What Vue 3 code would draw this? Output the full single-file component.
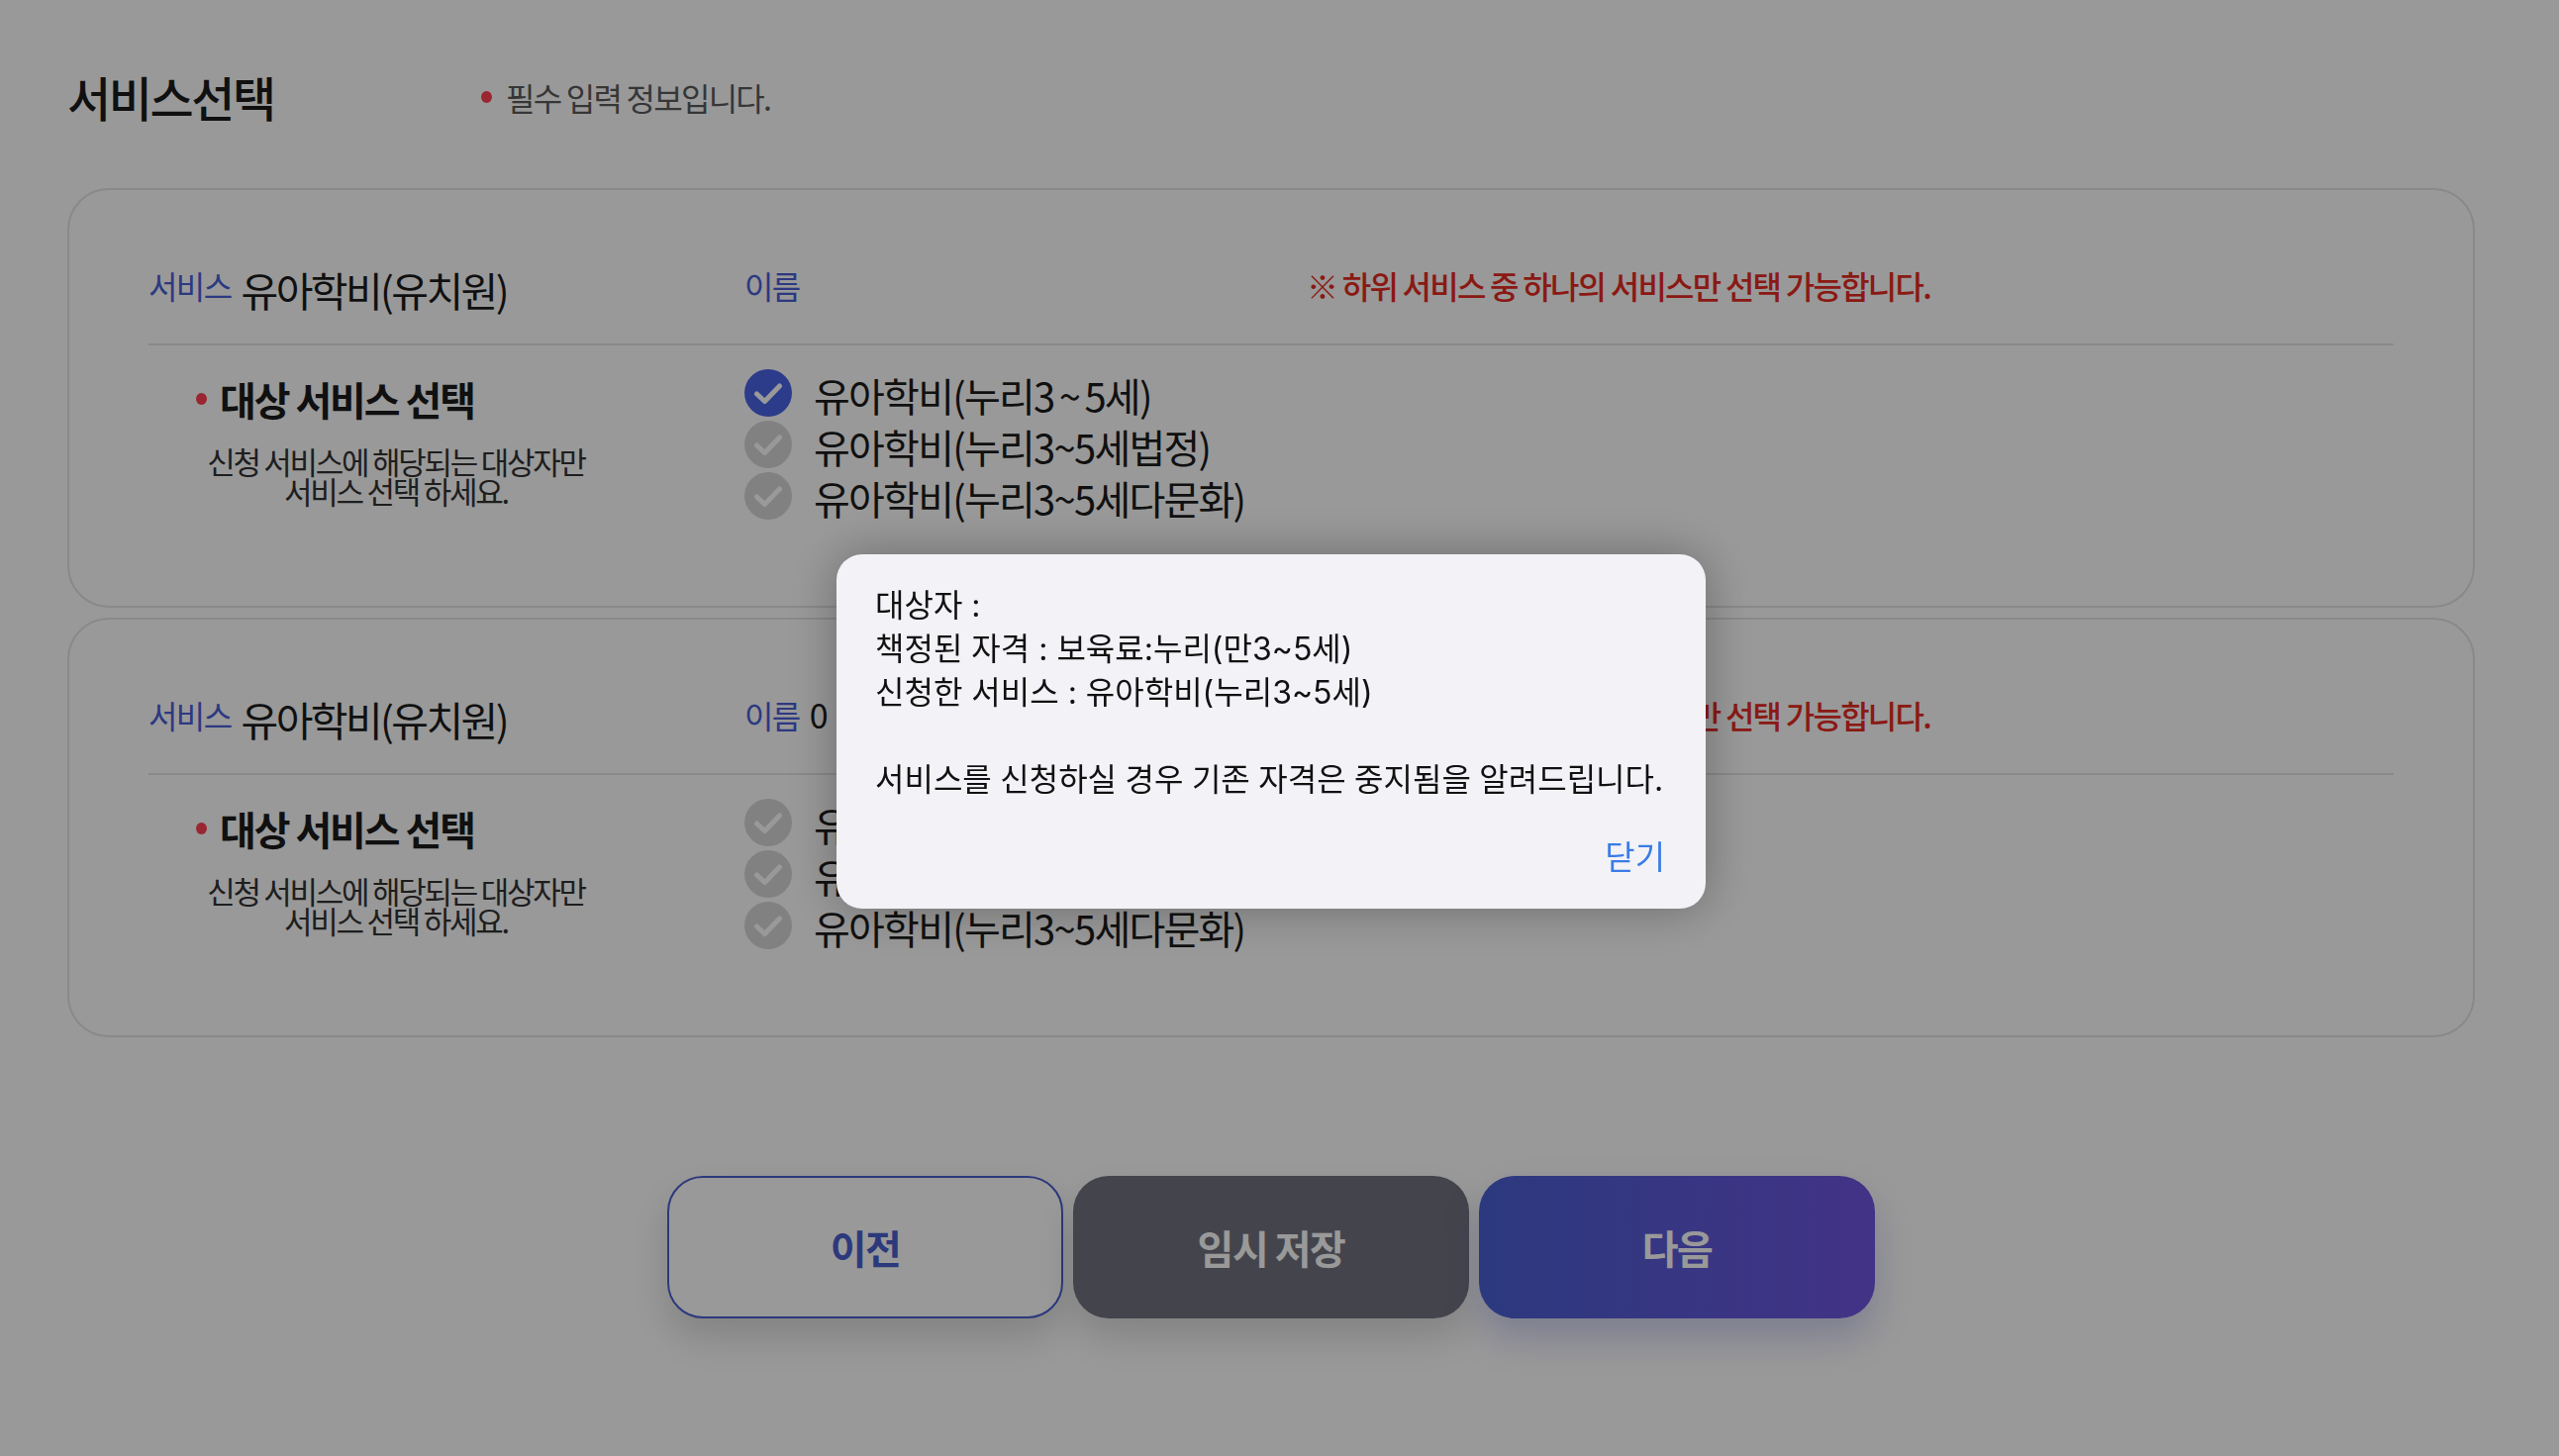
<script setup>
const services = [
  {
    name: '',
    options: [
      { label: '유아학비(누리3 ~ 5세)', checked: true },
      { label: '유아학비(누리3~5세법정)', checked: false },
      { label: '유아학비(누리3~5세다문화)', checked: false }
    ]
  },
  {
    name: '0',
    options: [
      { label: '유아학비(누리3~5세)', checked: false },
      { label: '유아학비(누리3~5세법정)', checked: false },
      { label: '유아학비(누리3~5세다문화)', checked: false }
    ]
  }
]
</script>

<template>
  <div class="page">
    <header class="head">
      <h1 class="page-title">서비스선택</h1>
      <p class="required"><span class="dot"></span>필수 입력 정보입니다.</p>
    </header>

    <section v-for="(svc, i) in services" :key="i" class="card">
      <div class="card-head">
        <div class="col-left">
          <span class="key">서비스</span>
          <span class="val">유아학비(유치원)</span>
        </div>
        <div class="col-name">
          <span class="key">이름</span>
          <span class="val name-val">{{ svc.name }}</span>
        </div>
        <div class="notice">※ 하위 서비스 중 하나의 서비스만 선택 가능합니다.</div>
      </div>
      <div class="card-body">
        <div class="col-left intro">
          <h2 class="target"><span class="dot"></span>대상 서비스 선택</h2>
          <p class="desc">신청 서비스에 해당되는 대상자만<br />서비스 선택 하세요.</p>
        </div>
        <ul class="options">
          <li v-for="opt in svc.options" :key="opt.label" class="option">
            <svg class="check" :class="{ on: opt.checked }" viewBox="0 0 48 48">
              <circle class="disc" cx="24" cy="24" r="24" />
              <path class="tick" d="M12.5 25l8 7.5L35.5 17" />
            </svg>
            <span class="opt-label">{{ opt.label }}</span>
          </li>
        </ul>
      </div>
    </section>

    <div class="actions">
      <button class="btn prev">이전</button>
      <button class="btn save">임시 저장</button>
      <button class="btn next">다음</button>
    </div>

    <div class="overlay">
      <div class="modal">
        <div class="msg">
          <div>대상자 :</div>
          <div>책정된 자격 : 보육료:누리(만3~5세)</div>
          <div>신청한 서비스 : 유아학비(누리3~5세)</div>
          <div class="blank"></div>
          <div class="tight">서비스를 신청하실 경우 기존 자격은 중지됨을 알려드립니다.</div>
        </div>
        <div class="modal-foot"><span class="close">닫기</span></div>
      </div>
    </div>
  </div>
</template>

<style scoped>
.page {
  box-sizing: border-box;
  width: 100%;
  min-height: 100vh;
  padding: 0 85px 0 68px;
  background: #fff;
  color: #1c1c1c;
  font-family: "Noto Sans CJK KR", "Noto Sans", sans-serif;
}
.head {
  box-sizing: border-box;
  height: 190px;
  padding-top: 5px;
  display: flex;
  align-items: center;
}
.page-title {
  margin: 0;
  width: 418px;
  font-size: 48px;
  font-weight: 500;
  letter-spacing: -2.4px;
  line-height: 1.2;
}
.required {
  margin: 0;
  display: flex;
  align-items: center;
  font-size: 32px;
  letter-spacing: -1.75px;
  color: #5a5a5a;
}
.dot {
  width: 11px;
  height: 12px;
  margin-right: 14px;
  border-radius: 50%;
  background: #ff4050;
  flex: none;
}
.card {
  box-sizing: border-box;
  height: 424px;
  margin-bottom: 10px;
  padding: 0 80px;
  border: 2px solid #e4e4e4;
  border-radius: 42px;
}
.card-head {
  box-sizing: border-box;
  height: 157px;
  padding-top: 45px;
  display: flex;
  align-items: center;
  border-bottom: 2px solid #e4e4e4;
}
.col-left {
  width: 602px;
  flex: none;
}
.key {
  font-size: 32px;
  letter-spacing: -1.6px;
  color: #4a60d8;
  position: relative;
  top: -8px;
}
.val {
  margin-left: 10px;
  font-size: 41px;
  letter-spacing: -2.6px;
}
.col-name {
  width: 568px;
  flex: none;
}
.col-name .key {
  top: -4.5px;
}
.name-val {
  position: relative;
  top: -4.5px;
  font-size: 34px;
}
.notice {
  position: relative;
  top: -4.5px;
  font-size: 32px;
  font-weight: 500;
  letter-spacing: -1.75px;
  color: #e62b22;
  white-space: nowrap;
}
.card-body {
  display: flex;
  padding-top: 24px;
}
.intro {
  box-sizing: border-box;
  width: 602px;
}
.target {
  margin: 4px 0 0 48px;
  display: flex;
  align-items: center;
  font-size: 40px;
  font-weight: 700;
  letter-spacing: -2.1px;
  line-height: 1.3;
}
.target .dot {
  margin-right: 13px;
}
.desc {
  margin: 22px 0 0;
  width: 500px;
  text-align: center;
  font-size: 31px;
  line-height: 30px;
  letter-spacing: -2.26px;
  color: #333;
}
.options {
  margin: 0;
  padding: 0;
  list-style: none;
  display: flex;
  flex-direction: column;
  gap: 4px;
}
.option {
  height: 48px;
  display: flex;
  align-items: center;
  gap: 22px;
}
.check {
  width: 48px;
  height: 48px;
  flex: none;
}
.disc {
  fill: #d8d8d8;
}
.tick {
  fill: none;
  stroke: #fff;
  stroke-width: 5;
  stroke-linecap: round;
  stroke-linejoin: round;
}
.check.on .disc {
  fill: #4a64e8;
}
.opt-label {
  font-size: 40px;
  letter-spacing: -1.75px;
  word-spacing: -2px;
  line-height: 48px;
  white-space: nowrap;
  padding-top: 4px;
}
.actions {
  margin-top: 140px;
  display: flex;
  justify-content: center;
  gap: 10px;
}
.btn {
  box-sizing: border-box;
  width: 400px;
  height: 144px;
  border-radius: 36px;
  font-family: inherit;
  font-size: 40px;
  font-weight: 700;
  letter-spacing: -1.5px;
  box-shadow: 0 20px 36px rgba(0, 0, 0, 0.14);
}
.prev {
  border: 2px solid #4a5fd0;
  background: #fff;
  color: #4a5fd0;
}
.save {
  border: 0;
  background: #72727f;
  color: #fff;
}
.next {
  border: 0;
  background: linear-gradient(90deg, #4a60d2, #7055e0);
  color: #fff;
  box-shadow: 0 20px 36px rgba(70, 80, 200, 0.25);
}
.overlay {
  position: fixed;
  inset: 0;
  background: rgba(0, 0, 0, 0.4);
}
.modal {
  position: absolute;
  left: 845px;
  top: 560px;
  box-sizing: border-box;
  width: 878px;
  height: 358px;
  padding: 30px 41px 0 39px;
  border-radius: 26px;
  background: #f2f2f7;
  box-shadow: 0 0 50px rgba(0, 0, 0, 0.3);
  color: #111;
}
.msg {
  font-family: Inter, "Noto Sans CJK KR", sans-serif;
  font-size: 32px;
  line-height: 44px;
  white-space: nowrap;
}
.tight {
  word-spacing: -0.5px;
}
.blank {
  height: 44px;
}
.modal-foot {
  margin-top: 32px;
  display: flex;
  justify-content: flex-end;
  font-size: 33px;
  line-height: 44px;
  color: #3a7ce6;
}
</style>
